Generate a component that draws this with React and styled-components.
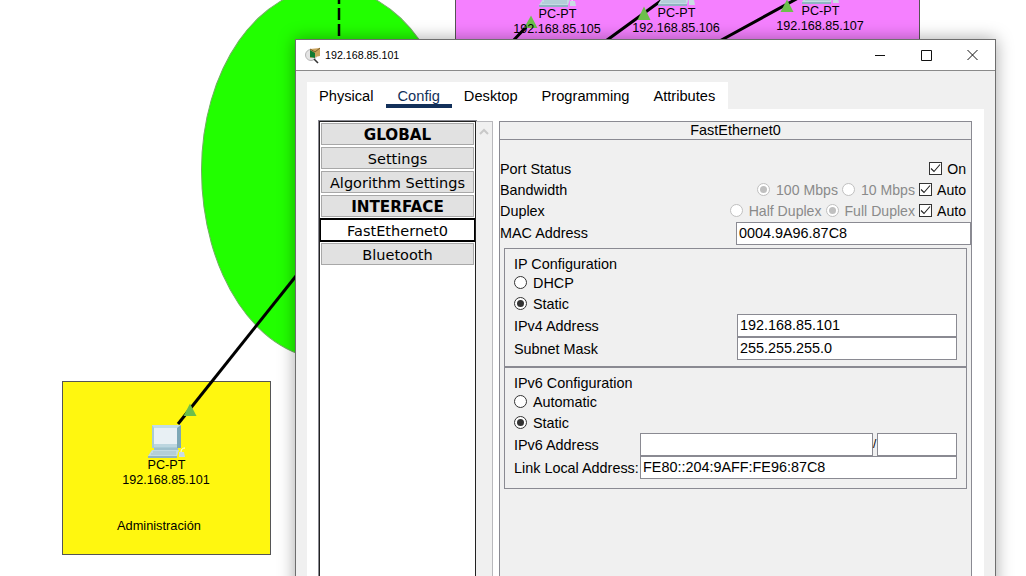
import styled, { createGlobalStyle } from "styled-components";

const sidebarItems = [
    { label: "GLOBAL", heading: true },
    { label: "Settings" },
    { label: "Algorithm Settings" },
    { label: "INTERFACE", heading: true },
    { label: "FastEthernet0", active: true },
    { label: "Bluetooth" },
];

const tabs = ["Physical", "Config", "Desktop", "Programming", "Attributes"];

const pinkNodes = [
    { x: 502, y: -26, ip: "192.168.85.105" },
    { x: 621, y: -27, ip: "192.168.85.106" },
    { x: 765, y: -29, ip: "192.168.85.107" },
];

function PcIcon() {
    return (
        <svg width="40" height="33" viewBox="0 0 40 33">
            <path d="M6 0h29v23H6z" fill="#a9cbd6" />
            <path d="M6 0h29l-3 3H8z" fill="#c4dde5" />
            <path d="M8 3h23v16H8z" fill="#e8f0f4" />
            <path d="M31 3l4-3v23h-4z" fill="#7da7b6" />
            <path d="M8 19h23v3H8z" fill="#bcd6df" />
            <path d="M8 23h24v2H8z" fill="#9fc0cc" />
            <path d="M6 25h27l-2 6H2z" fill="#c4dbe3" />
            <path d="M2 31h29v2H2z" fill="#8fb4c2" />
            <path d="M7 27h23M5 29h25" stroke="#a3c2cd" strokeWidth="1" />
            <path d="M33 27h5l1 5h-6z" fill="#c9dde4" />
            <path d="M35 27c0-3 2-4 4-4" fill="none" stroke="#fff" strokeWidth="1" />
        </svg>
    );
}

function WindowIcon() {
    return (
        <svg width="16" height="17" viewBox="0 0 16 17">
            <circle cx="6" cy="8" r="5.5" fill="#e4e4e4" stroke="#b5b5b5" />
            <path d="M9 12l4 4" stroke="#333" strokeWidth="1.6" />
            <path d="M5 2l10-1v8l-10 2z" fill="#c9a35c" />
            <path d="M5 2l5 3 5-4" fill="none" stroke="#7c5f2a" />
            <path d="M5 3l5 3v5l-5-1z" fill="#0f7a32" />
        </svg>
    );
}

function Node({ x, y, ip }) {
    return (
        <NodeBox $x={x} $y={y}>
            <PcIcon />
            <NodeName>PC-PT</NodeName>
            <NodeAddress>{ip}</NodeAddress>
        </NodeBox>
    );
}

function Check({ label }) {
    return (
        <CheckWrap>
            <CheckBox>
                <svg width="11" height="11" viewBox="0 0 11 11">
                    <path d="M1 5.5l3 3 6-7" fill="none" stroke="#222" strokeWidth="1.1" />
                </svg>
            </CheckBox>
            {label}
        </CheckWrap>
    );
}

function Radio({ label, checked, disabled }) {
    return (
        <RadioWrap $disabled={disabled}>
            <RadioDot $checked={checked} $disabled={disabled} />
            {label}
        </RadioWrap>
    );
}

export default function App() {
    return (
        <>
            <Global />
            <Canvas>
                <GreenCloud />
                <PinkArea />
                <YellowArea>
                    <AreaLabel>Administración</AreaLabel>
                </YellowArea>

                <Links width="1026" height="576" viewBox="0 0 1026 576">
                    <path d="M339 0V40" stroke="#000" strokeWidth="2.5" strokeDasharray="12 4" strokeDashoffset="8" />
                    <path d="M178 424L300 271" stroke="#000" strokeWidth="3" />
                    <path d="M511 43L528 25M603 43L662 0M716 43L800 -3" stroke="#000" strokeWidth="3" />
                    <path d="M190 403.5L196.5 416H183.5z" fill="#6dbf4b" />
                    <path d="M531 15.5L537.5 28H524z" fill="#6dbf4b" />
                    <path d="M644 6.5L650.5 20H637.5z" fill="#6dbf4b" />
                    <path d="M787 -0.5L793.5 12H780.5z" fill="#6dbf4b" />
                </Links>

                {pinkNodes.map((node) => (
                    <Node key={node.ip} {...node} />
                ))}
                <Node x={111} y={425} ip="192.168.85.101" />

                <Window>
                    <TitleBar>
                        <WindowIcon />
                        <WindowTitle>192.168.85.101</WindowTitle>
                        <WindowControls>
                            <svg width="103" height="14" viewBox="0 0 103 14">
                                <path d="M0 7.5H10" stroke="#111" />
                                <path d="M46.5 2.5h10v10h-10z" fill="none" stroke="#111" />
                                <path d="M92.5 2l10 10M102.5 2l-10 10" stroke="#111" />
                            </svg>
                        </WindowControls>
                    </TitleBar>

                    <WindowBody>
                        <TabBar>
                            {tabs.map((tab) => (
                                <Tab key={tab} $active={tab === "Config"}>
                                    {tab}
                                </Tab>
                            ))}
                        </TabBar>

                        <TabPanel>
                            <Sidebar>
                                {sidebarItems.map((item) => (
                                    <SideItem key={item.label} $heading={item.heading} $active={item.active}>
                                        {item.label}
                                    </SideItem>
                                ))}
                            </Sidebar>
                            <ScrollTrack>
                                <svg width="10" height="7" viewBox="0 0 10 7">
                                    <path d="M1 6l4-4 4 4" fill="none" stroke="#c8c8c8" strokeWidth="2" />
                                </svg>
                            </ScrollTrack>

                            <Detail>
                                <DetailHeader>FastEthernet0</DetailHeader>
                                <StatusRows>
                                    <StatusRow>
                                        <span>Port Status</span>
                                        <Options>
                                            <Check label="On" />
                                        </Options>
                                    </StatusRow>
                                    <StatusRow>
                                        <span>Bandwidth</span>
                                        <Options>
                                            <Radio label="100 Mbps" checked disabled />
                                            <Radio label="10 Mbps" disabled />
                                            <Check label="Auto" />
                                        </Options>
                                    </StatusRow>
                                    <StatusRow>
                                        <span>Duplex</span>
                                        <Options>
                                            <Radio label="Half Duplex" disabled />
                                            <Radio label="Full Duplex" checked disabled />
                                            <Check label="Auto" />
                                        </Options>
                                    </StatusRow>
                                    <MacRow>
                                        <span>MAC Address</span>
                                        <Field $width={235}>0004.9A96.87C8</Field>
                                    </MacRow>
                                </StatusRows>

                                <Groups>
                                    <Group $height={119}>
                                        <GroupTitle>IP Configuration</GroupTitle>
                                        <Radio label="DHCP" />
                                        <Radio label="Static" checked />
                                        <FieldRow $label={223}>
                                            <span>IPv4 Address</span>
                                            <Field $width={220}>192.168.85.101</Field>
                                        </FieldRow>
                                        <FieldRow $label={223}>
                                            <span>Subnet Mask</span>
                                            <Field $width={220}>255.255.255.0</Field>
                                        </FieldRow>
                                    </Group>
                                    <Group $height={123}>
                                        <GroupTitle>IPv6 Configuration</GroupTitle>
                                        <Radio label="Automatic" />
                                        <Radio label="Static" checked />
                                        <FieldRow $label={126}>
                                            <span>IPv6 Address</span>
                                            <Field $width={233} />
                                            <Slash>/</Slash>
                                            <Field $width={80} />
                                        </FieldRow>
                                        <FieldRow $label={126}>
                                            <span>Link Local Address:</span>
                                            <Field $width={317}>FE80::204:9AFF:FE96:87C8</Field>
                                        </FieldRow>
                                    </Group>
                                </Groups>
                            </Detail>
                        </TabPanel>
                    </WindowBody>
                </Window>
            </Canvas>
        </>
    );
}

const Global = createGlobalStyle`

    html, body {
        margin: 0;
        padding: 0;
        background: #ffffff;
    }

    body {
        font-family: "Liberation Sans", Arial, sans-serif;
        color: #000000;
    }

`;

const Canvas = styled.div`

    position: relative;

    width: 1026px;
    height: 576px;

    overflow: hidden;

    background: #ffffff;

`;

const GreenCloud = styled.div`

    position: absolute;
    left: 201px;
    top: -13px;

    width: 257px;
    height: 373px;

    box-sizing: border-box;

    background: #22ff00;
    border: 1px solid #6fae5f;
    border-radius: 128px / 183px 183px 190px 190px;

`;

const PinkArea = styled.div`

    position: absolute;
    left: 455px;
    top: -20px;

    width: 465px;
    height: 120px;

    box-sizing: border-box;

    background: #f580ff;
    border: 1px solid #555555;

`;

const YellowArea = styled.div`

    position: absolute;
    left: 62px;
    top: 381px;

    width: 209px;
    height: 174px;

    box-sizing: border-box;

    background: #fff70f;
    border: 1px solid #555555;

`;

const AreaLabel = styled.div`

    position: absolute;
    left: 54px;
    top: 136px;

    font-size: 12.8px;
    line-height: 16px;

`;

const Links = styled.svg`

    position: absolute;
    left: 0;
    top: 0;

`;

const NodeBox = styled.div`

    position: absolute;
    left: ${(props) => props.$x}px;
    top: ${(props) => props.$y}px;

    width: 110px;

    display: flex;
    flex-direction: column;
    align-items: center;

`;

const NodeName = styled.div`

    margin-left: 1px;

    font-size: 12.6px;
    line-height: 15px;

`;

const NodeAddress = styled.div`

    font-size: 12.6px;
    line-height: 15px;

`;

const Window = styled.div`

    position: absolute;
    left: 295px;
    top: 39px;

    width: 701px;
    height: 600px;

    box-sizing: border-box;

    display: flex;
    flex-direction: column;

    background: #ffffff;
    border: 1px solid #6e6e6e;
    box-shadow: 0 0 16px rgba(0, 0, 0, 0.35);

`;

const TitleBar = styled.div`

    height: 31px;
    padding-left: 9px;

    flex-shrink: 0;
    box-sizing: border-box;

    display: flex;
    align-items: center;
    gap: 4px;

    border-bottom: 1px solid #8a8a8a;

`;

const WindowTitle = styled.div`

    font-size: 10.7px;

`;

const WindowControls = styled.div`

    margin-left: auto;
    margin-right: 17px;

    display: flex;

`;

const WindowBody = styled.div`

    flex: 1;
    padding: 11px 11px 0 11px;

    display: flex;
    flex-direction: column;

    background: #f0f0f0;

`;

const TabBar = styled.div`

    width: 421px;
    height: 27px;

    display: flex;
    align-items: flex-start;

    background: #ffffff;

`;

const Tab = styled.div`

    height: 22px;
    padding: 0 12px;

    font-size: 14.65px;
    line-height: 28px;
    color: ${(props) => (props.$active ? "#12305a" : "#000000")};

    box-sizing: content-box;
    border-bottom: 4px solid ${(props) => (props.$active ? "#12305a" : "transparent")};

`;

const TabPanel = styled.div`

    flex: 1;
    padding: 12px;

    display: flex;
    align-items: stretch;

    background: #ffffff;

`;

const Sidebar = styled.div`

    width: 157px;

    flex-shrink: 0;
    box-sizing: border-box;

    display: flex;
    flex-direction: column;
    gap: 2px;

    padding-top: 1px;

    background: #ffffff;
    border: 1px solid #222222;
    outline: 1px solid #8a8a92;

`;

const SideItem = styled.div`

    height: ${(props) => (props.$active ? "24px" : "22px")};
    margin: ${(props) => (props.$active ? "-1px 0" : "0 1px")};

    box-sizing: border-box;

    font-family: "DejaVu Sans", Verdana, sans-serif;
    font-size: ${(props) => (props.$heading ? "15.2px" : "14.5px")};
    font-weight: ${(props) => (props.$heading ? 700 : 400)};
    line-height: ${(props) => (props.$active ? "23px" : "22px")};
    text-align: center;

    background: ${(props) => (props.$active ? "#ffffff" : "#e1e1e1")};
    border: 1px solid ${(props) => (props.$active ? "#000000" : "#a8a8a8")};
    border-width: ${(props) => (props.$active ? "2px 1px" : "1px")};

`;

const ScrollTrack = styled.div`

    width: 17px;
    padding-top: 6px;

    flex-shrink: 0;
    box-sizing: border-box;

    display: flex;
    justify-content: center;
    align-items: flex-start;

    background: #f0f0f0;
    border: 1px solid #b8b8bc;
    border-left: none;

`;

const Detail = styled.div`

    width: 473px;
    margin-left: 6px;

    box-sizing: border-box;

    display: flex;
    flex-direction: column;

    background: #f0f0f0;
    border: 1px solid #8a8a92;

    font-size: 14.4px;

`;

const DetailHeader = styled.div`

    height: 18px;

    flex-shrink: 0;
    box-sizing: border-box;

    font-size: 14.4px;
    line-height: 16px;
    text-align: center;

    border-bottom: 1px solid #8a8a92;

`;

const StatusRows = styled.div`

    padding-top: 18px;

    display: flex;
    flex-direction: column;

`;

const StatusRow = styled.div`

    height: 21px;
    padding-right: 5px;

    display: flex;
    align-items: center;
    justify-content: space-between;

`;

const MacRow = styled.div`

    height: 22px;
    margin-top: 1px;

    display: flex;
    align-items: center;
    justify-content: space-between;

`;

const Options = styled.div`

    display: flex;
    align-items: center;
    gap: 4px;

    font-size: 14.1px;

`;

const CheckWrap = styled.div`

    display: flex;
    align-items: center;
    gap: 5px;

`;

const CheckBox = styled.span`

    width: 13px;
    height: 13px;

    box-sizing: border-box;

    display: inline-flex;
    align-items: center;
    justify-content: center;

    background: #ffffff;
    border: 1px solid #333333;

`;

const RadioWrap = styled.div`

    height: 21px;

    display: flex;
    align-items: center;
    gap: 6px;

    color: ${(props) => (props.$disabled ? "#8a8a8a" : "#000000")};

`;

const RadioDot = styled.span`

    position: relative;

    width: 13px;
    height: 13px;

    box-sizing: border-box;

    background: #ffffff;
    border: 1px solid ${(props) => (props.$disabled ? "#c0c0c0" : "#333333")};
    border-radius: 50%;

    &::after {
        content: "";
        display: ${(props) => (props.$checked ? "block" : "none")};
        position: absolute;
        left: 2px;
        top: 2px;
        width: 7px;
        height: 7px;
        border-radius: 50%;
        background: ${(props) => (props.$disabled ? "#c0c0c0" : "#333333")};
    }

`;

const Field = styled.div`

    width: ${(props) => props.$width}px;
    height: 23px;
    padding-left: 2px;

    flex-shrink: 0;
    box-sizing: border-box;

    font-size: 14.4px;
    line-height: 21px;

    background: #ffffff;
    border: 1px solid #8a8a92;

`;

const Groups = styled.div`

    margin: 4px 4px 0 4px;

    display: flex;
    flex-direction: column;

`;

const Group = styled.div`

    height: ${(props) => props.$height}px;
    padding: 5px 9px 0 9px;

    box-sizing: border-box;

    display: flex;
    flex-direction: column;

    border: 1px solid #8a8a92;

    & + & {
        margin-top: -1px;
        border-top-width: 2px;
    }

`;

const GroupTitle = styled.div`

    height: 18px;

    line-height: 20px;

`;

const FieldRow = styled.div`

    height: 23px;

    display: grid;
    grid-template-columns: ${(props) => props.$label}px auto auto auto;
    justify-content: start;
    align-items: center;

    white-space: nowrap;

`;

const Slash = styled.span`

    width: 4px;

    font-size: 12px;
    line-height: 23px;

`;
